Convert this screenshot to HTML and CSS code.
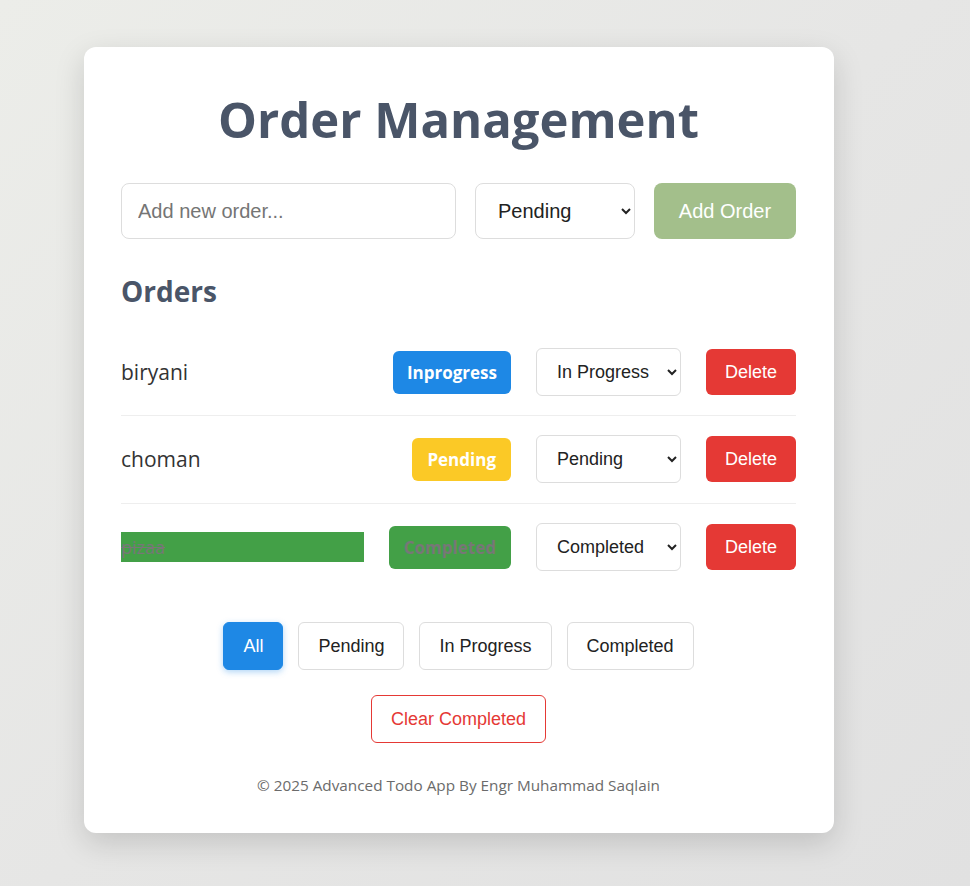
FILE: index.html
```html
<!DOCTYPE html>
<html lang="en">
<head>
<meta charset="utf-8">
<title>Order Management</title>
<link rel="stylesheet" href="styles.css">
</head>
<body>
<div class="card">
  <h1 class="title">Order Management</h1>
  <div class="add-row">
    <input class="add-input" type="text" placeholder="Add new order...">
    <select class="add-select">
      <option>Pending</option>
      <option>In Progress</option>
      <option>Completed</option>
    </select>
    <button class="add-btn">Add Order</button>
  </div>
  <h2 class="section-title">Orders</h2>
  <ul class="orders">
    <li class="order">
      <span class="order-name">biryani</span>
      <span class="badge badge-progress">Inprogress</span>
      <select class="status-select">
        <option>Pending</option>
        <option selected>In Progress</option>
        <option>Completed</option>
      </select>
      <button class="delete-btn">Delete</button>
    </li>
    <li class="order">
      <span class="order-name">choman</span>
      <span class="badge badge-pending">Pending</span>
      <select class="status-select">
        <option selected>Pending</option>
        <option>In Progress</option>
        <option>Completed</option>
      </select>
      <button class="delete-btn">Delete</button>
    </li>
    <li class="order order-done">
      <span class="order-name">pizaa</span>
      <span class="badge badge-completed">Completed</span>
      <select class="status-select">
        <option>Pending</option>
        <option>In Progress</option>
        <option selected>Completed</option>
      </select>
      <button class="delete-btn">Delete</button>
    </li>
  </ul>
  <div class="filters">
    <button class="filter-btn filter-active">All</button>
    <button class="filter-btn">Pending</button>
    <button class="filter-btn">In Progress</button>
    <button class="filter-btn">Completed</button>
  </div>
  <div class="clear-wrap">
    <button class="clear-btn">Clear Completed</button>
  </div>
  <p class="footer">© 2025 Advanced Todo App By Engr Muhammad Saqlain</p>
</div>
</body>
</html>
```
FILE: styles.css
```css
html {
  min-height: 100%;
  background: linear-gradient(135deg, #ecede9 0%, #e6e6e5 50%, #e1e1e1 100%);
}
body {
  margin: 0;
  min-height: 886px;
  font-family: "Open Sans", "Noto Sans", sans-serif;
  color: #333;
}
.card {
  box-sizing: border-box;
  width: 750px;
  margin: 47px 0 0 84px;
  padding: 42px 38px 38px 37px;
  background: #fff;
  border-radius: 12px;
  box-shadow: 0 10px 30px rgba(0, 0, 0, 0.15);
}
.title {
  margin: 0 0 33px;
  text-align: center;
  font-size: 49px;
  line-height: 61px;
  font-weight: 700;
  color: #4a5568;
}
.add-row {
  display: flex;
  gap: 19px;
  height: 56px;
}
.add-input {
  flex: 1;
  min-width: 0;
  box-sizing: border-box;
  padding: 0 16px;
  border: 1px solid #ddd;
  border-radius: 8px;
  font-family: "Liberation Sans", Arial, sans-serif;
  font-size: 20px;
  color: #333;
  outline: none;
}
.add-input::placeholder {
  color: #757575;
}
.add-select {
  width: 160px;
  box-sizing: border-box;
  padding: 0 12px 0 18px;
  border: 1px solid #ddd;
  border-radius: 8px;
  background: #fff;
  font-family: "Liberation Sans", Arial, sans-serif;
  font-size: 20px;
  color: #222;
}
.add-btn {
  width: 142px;
  border: none;
  border-radius: 8px;
  background: #a3bf8b;
  color: #fff;
  font-family: "Liberation Sans", Arial, sans-serif;
  font-size: 20px;
}
.section-title {
  margin: 34px 0 0;
  font-size: 28px;
  line-height: 36px;
  font-weight: 700;
  color: #4a5568;
}
.orders {
  list-style: none;
  margin: 19px 0 0;
  padding: 0;
}
.order {
  display: flex;
  align-items: center;
  gap: 25px;
  padding: 19px 0 20px;
  border-bottom: 1px solid #eee;
}
.order:first-child {
  padding: 20px 0 19px;
}
.order:last-child {
  border-bottom: none;
}
.order-name {
  flex: 1;
  font-size: 21px;
  line-height: 30px;
  color: #333;
}
.order-done .order-name {
  background: #43a047;
  color: #777;
  font-size: 18px;
  text-decoration: line-through;
}
.badge {
  display: flex;
  align-items: center;
  height: 43px;
  padding: 0 15px;
  border-radius: 6px;
  color: #fff;
  font-size: 17px;
  font-weight: 700;
}
.badge-progress { background: #1e88e5; padding: 0 14px; }
.badge-pending { background: #fbc926; }
.badge-completed { background: #43a047; color: #777; }
.status-select {
  width: 145px;
  height: 48px;
  box-sizing: border-box;
  padding: 0 8px 0 16px;
  border: 1px solid #ddd;
  border-radius: 6px;
  background: #fff;
  font-family: "Liberation Sans", Arial, sans-serif;
  font-size: 18px;
  color: #222;
}
.delete-btn {
  width: 90px;
  height: 46px;
  border: none;
  border-radius: 6px;
  background: #e53935;
  color: #fff;
  font-family: "Liberation Sans", Arial, sans-serif;
  font-size: 18px;
}
.filters {
  display: flex;
  justify-content: center;
  gap: 15px;
  margin-top: 31px;
}
.filter-btn {
  height: 48px;
  padding: 0 19px;
  border: 1px solid #ddd;
  border-radius: 6px;
  background: #fff;
  color: #222;
  font-family: "Liberation Sans", Arial, sans-serif;
  font-size: 18px;
}
.filter-active {
  background: #1e88e5;
  border-color: #1e88e5;
  color: #fff;
  box-shadow: 0 2px 6px rgba(30, 136, 229, 0.35);
}
.clear-wrap {
  display: flex;
  justify-content: center;
  margin-top: 25px;
}
.clear-btn {
  height: 48px;
  padding: 0 19px;
  border: 1px solid #e53935;
  border-radius: 6px;
  background: #fff;
  color: #e53935;
  font-family: "Liberation Sans", Arial, sans-serif;
  font-size: 18px;
}
.footer {
  margin: 32px 0 0;
  text-align: center;
  font-size: 15.3px;
  line-height: 20px;
  color: #6b6b6b;
}
```
